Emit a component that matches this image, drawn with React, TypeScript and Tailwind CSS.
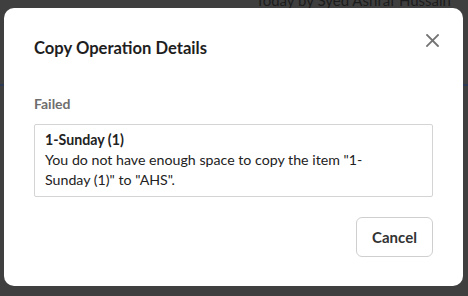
import React from "react";

export default function App() {
  return (
    <div
      className="relative w-[468px] h-[296px] overflow-hidden bg-[#3f3f3f]"
      style={{ fontFamily: "Lato, 'Open Sans', sans-serif" }}
    >
      {/* dimmed page behind */}
      <div className="absolute right-[17px] top-[-10px] text-[15px] leading-[20px] text-[#1c1c1c] whitespace-nowrap">
        Today by Syed Ashraf Hussain
      </div>
      <div className="absolute left-0 right-0 top-[84px] h-[2px] bg-[#2c3a55]" />

      {/* modal */}
      <div className="absolute left-[4px] top-[8px] w-[459px] h-[278px] rounded-[10px] bg-white flex flex-col px-[30px] pt-[28px] pb-[29px]">
        <div className="flex items-start justify-between">
          <h2 className="text-[16.6px] leading-[24px] font-bold text-[#1e1e1e]">
            Copy Operation Details
          </h2>
          <button className="mt-[-2px] mr-[-6px] w-[13px] h-[13px] text-[#747474]" aria-label="Close">
            <svg width="13" height="13" viewBox="0 0 13 13" fill="none" stroke="currentColor" strokeWidth="1.8" strokeLinecap="square">
              <path d="M1 1 L12 12 M12 1 L1 12" />
            </svg>
          </button>
        </div>

        <div className="mt-[34px] text-[14px] leading-[20px] font-bold text-[#6e6e6e]">Failed</div>

        <div className="mt-[10px] border border-[#d4d4d4] rounded-[2px] pl-[10px] pr-[32px] pt-[5px] pb-[6px] text-[14.2px] leading-[20px] text-[#222]">
          <div className="font-bold">1-Sunday (1)</div>
          <div>You do not have enough space to copy the item "1-Sunday (1)" to "AHS".</div>
        </div>

        <div className="mt-[20px] flex justify-end">
          <button className="w-[77px] h-[40px] rounded-[6px] border border-[#cfcfcf] bg-white text-[15px] font-bold text-[#333]">
            Cancel
          </button>
        </div>
      </div>
    </div>
  );
}
